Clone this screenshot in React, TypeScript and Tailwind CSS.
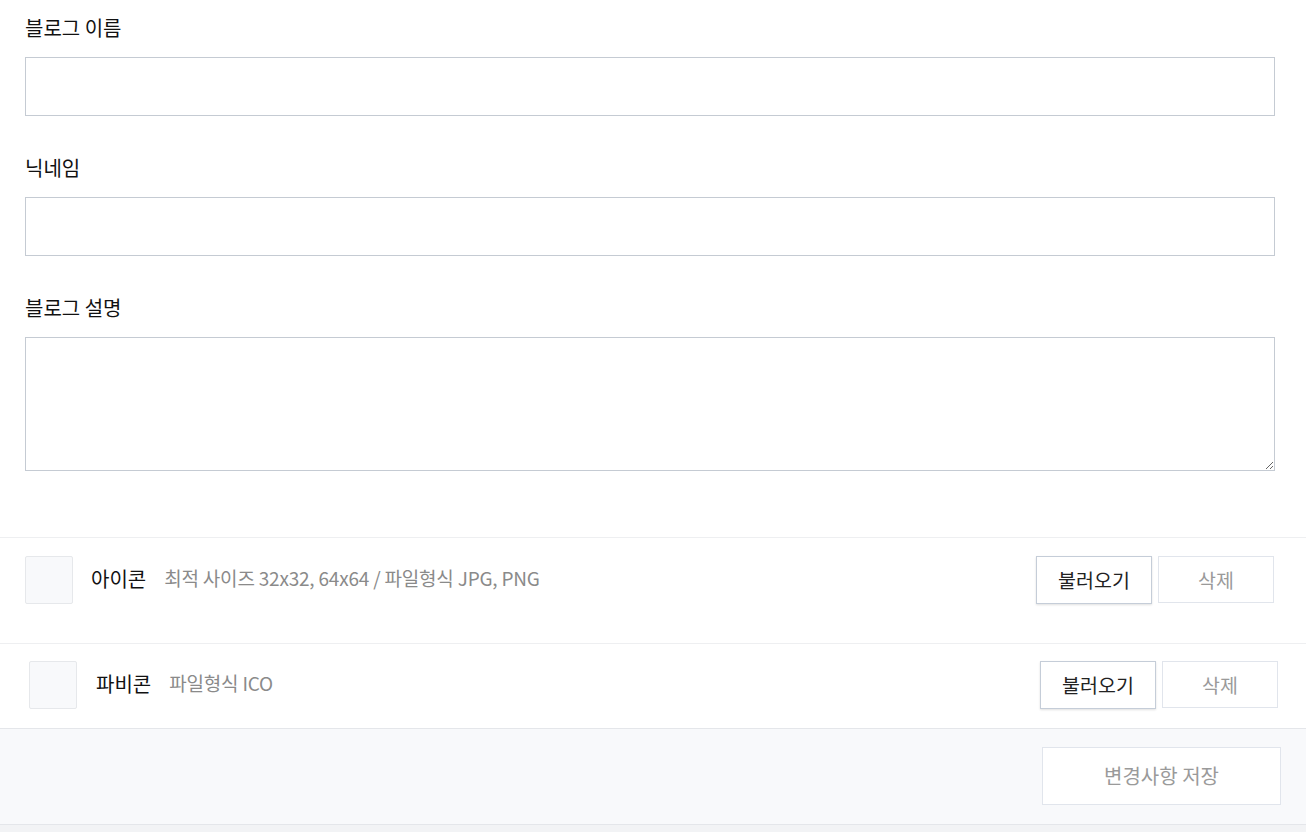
import React from "react";

const font = { fontFamily: '"Noto Sans CJK KR", "Noto Sans", sans-serif' };

function Field({ label, tall }: { label: string; tall?: boolean }) {
  return (
    <div className="flex flex-col">
      <label className="text-[20px] leading-[26px] text-[#111] h-[26px]">{label}</label>
      <div className="h-[16px]" />
      {tall ? (
        <textarea className="block w-full h-[134px] border border-[#c5cbd3] bg-white outline-none resize-y" />
      ) : (
        <input className="block w-full h-[59px] border border-[#c5cbd3] bg-white outline-none" />
      )}
    </div>
  );
}

function UploadRow({
  title,
  desc,
  inset,
}: {
  title: string;
  desc: string;
  inset: boolean;
}) {
  return (
    <div
      className={
        "flex items-start border-t border-[#eeeff1] " +
        (inset ? "h-[106px] pt-[18px] pl-[25px] pr-[32px]" : "h-[85px] pt-[17px] pl-[29px] pr-[28px]")
      }
    >
      <div className="w-[48px] h-[48px] bg-[#f8f9fb] border border-[#e6e8eb] rounded-[2px] shrink-0" />
      <div className="h-[48px] flex items-center pb-[3px]">
        <span className={"text-[20px] text-[#111] " + (inset ? "ml-[18px]" : "ml-[19px]")}>{title}</span>
        <span className="text-[19px] text-[#8a8a8a] ml-[18px] tracking-[-0.2px]">{desc}</span>
      </div>
      <div className="flex-1" />
      <button className="w-[116px] h-[48px] border border-[#c5cdd8] bg-white text-[19.5px] text-[#222] shadow-[0_1px_2px_rgba(0,0,0,0.12)]">
        불러오기
      </button>
      <button className="w-[116px] h-[47px] ml-[6px] border border-[#e1e5ec] bg-white text-[19.5px] text-[#9a9a9a]">
        삭제
      </button>
    </div>
  );
}

export default function App() {
  return (
    <div className="w-[1306px] h-[832px] bg-[#f2f3f5] overflow-hidden" style={font}>
      <div className="bg-white">
        <div className="pl-[25px] pr-[31px] pt-[15px] pb-[66px] flex flex-col gap-[39px]">
          <Field label="블로그 이름" />
          <Field label="닉네임" />
          <Field label="블로그 설명" tall />
        </div>
        <UploadRow title="아이콘" desc="최적 사이즈 32x32, 64x64 / 파일형식 JPG, PNG" inset />
        <UploadRow title="파비콘" desc="파일형식 ICO" inset={false} />
      </div>
      <div className="h-[97px] bg-[#f8f9fb] border-t border-b border-[#e4e6ea] flex items-start justify-end pr-[25px] pt-[18px]">
        <button className="w-[239px] h-[58px] bg-white border border-[#e1e5ec] text-[20px] text-[#9a9a9a]">
          변경사항 저장
        </button>
      </div>
    </div>
  );
}
